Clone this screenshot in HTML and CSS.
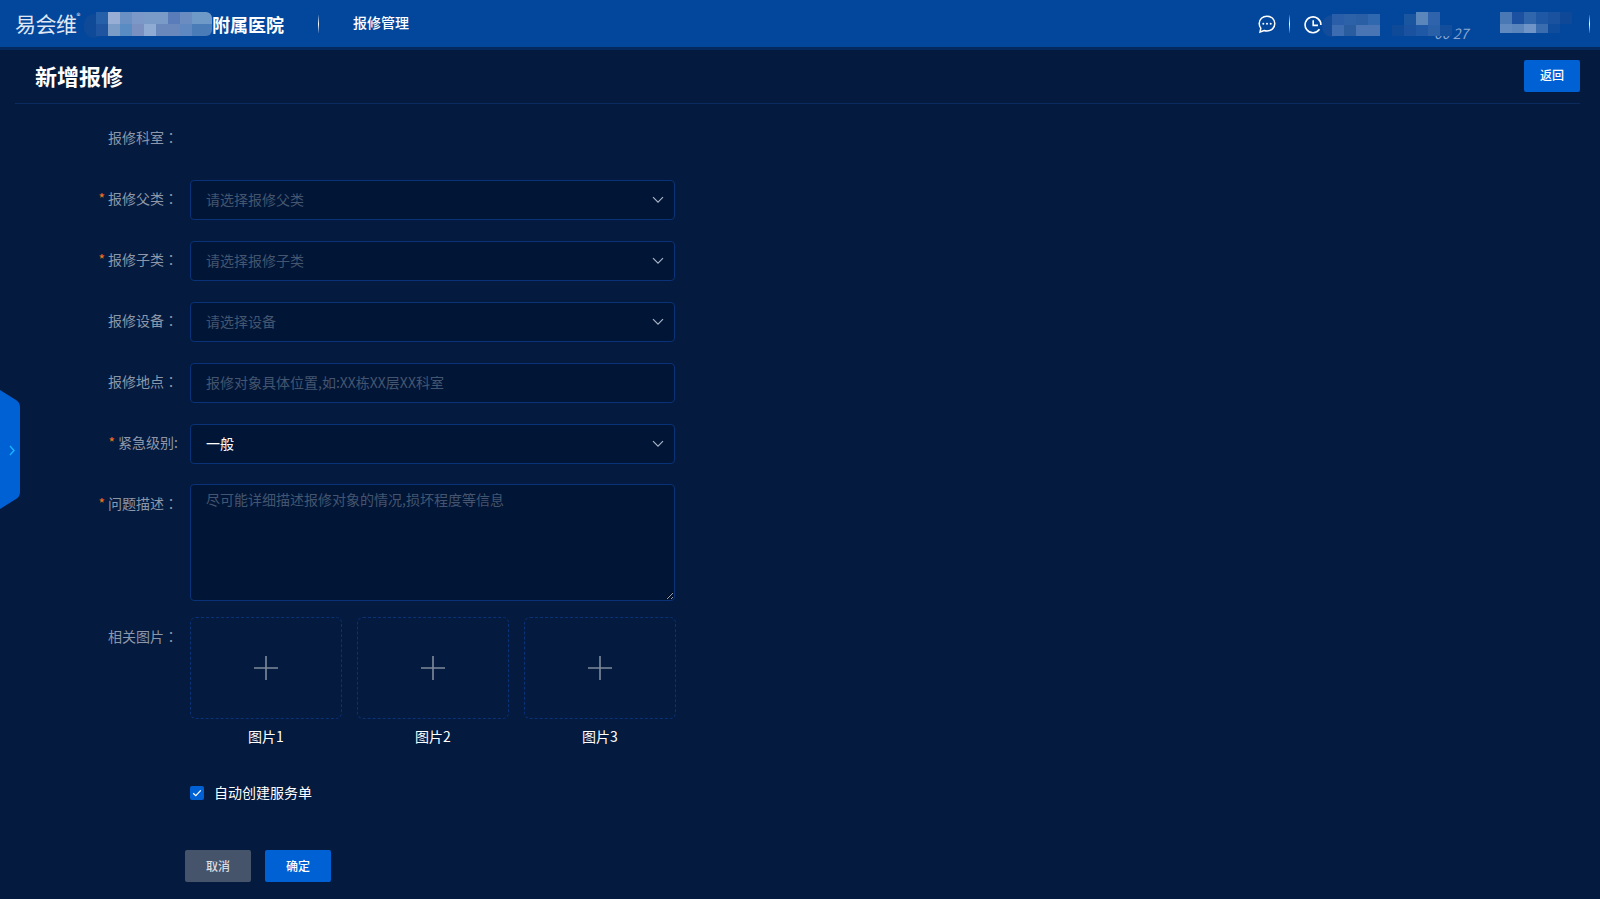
FILE: index.html
```html
<!DOCTYPE html>
<html lang="zh-CN">
<head>
<meta charset="utf-8">
<title>新增报修</title>
<link rel="stylesheet" href="styles.css">
</head>
<body>
<header class="topbar">
  <div class="logo">易会维<sup class="reg">®</sup></div>
  <svg class="mosaic-left" width="128" height="47" viewBox="0 0 128 47">
    <rect x="0" y="14" width="20" height="24" rx="10" fill="#0f4a98"/>
    <rect x="12" y="12" width="12" height="12" fill="#2560a8"/><rect x="24" y="12" width="12" height="12" fill="#99aed4"/><rect x="36" y="12" width="12" height="12" fill="#6a90c4"/><rect x="48" y="12" width="12" height="12" fill="#7c98c8"/><rect x="60" y="12" width="12" height="12" fill="#7a9ac8"/><rect x="72" y="12" width="12" height="12" fill="#7a9ac8"/><rect x="84" y="12" width="12" height="12" fill="#5a7cb8"/><rect x="96" y="12" width="12" height="12" fill="#6a8cc0"/>
    <rect x="12" y="24" width="12" height="12" fill="#1f55a0"/><rect x="24" y="24" width="12" height="12" fill="#7c9cc8"/><rect x="36" y="24" width="12" height="12" fill="#5a8cc4"/><rect x="48" y="24" width="12" height="12" fill="#7a90c0"/><rect x="60" y="24" width="12" height="12" fill="#8fabd4"/><rect x="72" y="24" width="12" height="12" fill="#6a88bc"/><rect x="84" y="24" width="12" height="12" fill="#6a88bc"/><rect x="96" y="24" width="12" height="12" fill="#6088c0"/>
    <path d="M108 12h14a6 6 0 0 1 6 6v6h-20z" fill="#6f9ac8"/>
    <path d="M108 24h20v6a6 6 0 0 1-6 6h-14z" fill="#4a7cb8"/>
  </svg>
  <div class="hospital">附属医院</div>
  <span class="sep sep-nav"></span>
  <nav class="nav">报修管理</nav>
  <div class="top-right">
    <svg class="icon-msg" width="20" height="20" viewBox="0 0 20 20" fill="none" stroke="#fff" stroke-width="1.5">
      <path d="M10 2.200c4.400 0 7.800 3.200 7.800 7.400s-3.400 7.400-7.800 7.400c-1 0-2-.2-2.900-.5L3 18l.8-3.700C2.800 13 2.200 11.400 2.200 9.600 2.200 5.400 5.600 2.200 10 2.200z"/>
      <circle cx="6.300" cy="9.700" r="1" fill="#fff" stroke="none"/><circle cx="10" cy="9.700" r="1" fill="#fff" stroke="none"/><circle cx="13.700" cy="9.700" r="1" fill="#fff" stroke="none"/>
    </svg>
    <span class="sep sep-msg"></span>
    <svg class="icon-clock" width="18" height="18" viewBox="0 0 18 18" fill="none" stroke="#fff" stroke-width="1.600">
      <path d="M15.500 13.300A7.900 7.900 0 1 1 16.900 9"/>
      <path d="M9.200 4.200V9.400H14"/>
    </svg>
    <div class="user-block">
      <span class="time-tail">00 27</span>
      <svg class="user-mosaic" width="258" height="47" viewBox="0 0 258 47">
        <rect x="0" y="15" width="20" height="22" rx="10" fill="#124c9b"/>
        <rect x="10" y="14" width="12" height="11" fill="#2a5ea8"/><rect x="22" y="14" width="12" height="11" fill="#2d62a8"/><rect x="34" y="14" width="12" height="11" fill="#2a5fa5"/><rect x="46" y="14" width="12" height="11" fill="#2f68ae"/>
        <rect x="10" y="25" width="12" height="11" fill="#3d6db0"/><rect x="22" y="25" width="12" height="11" fill="#2a5ca0"/><rect x="34" y="25" width="12" height="11" fill="#4a75b5"/><rect x="46" y="25" width="12" height="11" fill="#4a75b5"/>
        <rect x="70" y="25" width="60" height="11" fill="#0f4a98"/>
        <rect x="82" y="14" width="12" height="11" fill="#1a56a0"/><rect x="94" y="12" width="12" height="13" fill="#5a86bc"/><rect x="106" y="12" width="12" height="13" fill="#2f64ac"/>
        <rect x="82" y="25" width="12" height="11" fill="#1a52a0"/><rect x="94" y="25" width="12" height="11" fill="#1f58a4"/><rect x="106" y="25" width="12" height="11" fill="#2a60a8"/><rect x="118" y="25" width="12" height="11" fill="#134e9c"/>
        <rect x="178" y="12" width="12" height="12" fill="#4a78b4"/><rect x="190" y="12" width="12" height="12" fill="#1c50a0"/><rect x="202" y="12" width="12" height="12" fill="#2f66ac"/><rect x="214" y="12" width="12" height="12" fill="#1f58a4"/><rect x="226" y="12" width="12" height="12" fill="#1a52a0"/><rect x="238" y="12" width="12" height="12" fill="#0f4896"/>
        <rect x="178" y="24" width="12" height="9" fill="#6089c0"/><rect x="190" y="24" width="12" height="9" fill="#5a84bc"/><rect x="202" y="24" width="12" height="9" fill="#6f94c8"/><rect x="214" y="24" width="12" height="9" fill="#3a6cb0"/><rect x="226" y="24" width="12" height="9" fill="#0f4c9c"/>
      </svg>
    </div>
    <span class="sep sep-end"></span>
  </div>
</header>

<svg class="side-tab" width="20" height="120" viewBox="0 0 20 120">
  <path d="M0 0L16 10Q20 12.500 20 17V102Q20 106.500 16 109L0 119z" fill="#0061d5"/>
  <path d="M10 56l4 4.500-4 4.500" fill="none" stroke="#16b4ff" stroke-width="1.400"/>
</svg>

<main class="page">
  <div class="title-row">
    <h1 class="title">新增报修</h1>
    <button class="btn btn-primary" type="button">返回</button>
  </div>

  <form class="form">
    <div class="row">
      <label class="label">报修科室<span class="colon" lang="zh-TW">：</span></label>
      <div class="control"></div>
    </div>
    <div class="row">
      <label class="label"><i class="req">*</i>报修父类<span class="colon" lang="zh-TW">：</span></label>
      <div class="control select"><span class="ph">请选择报修父类</span><svg class="chev" width="12" height="8" viewBox="0 0 12 8"><path d="M1 1.200l5 5 5-5" fill="none" stroke="#a9b4c4" stroke-width="1.200"/></svg></div>
    </div>
    <div class="row">
      <label class="label"><i class="req">*</i>报修子类<span class="colon" lang="zh-TW">：</span></label>
      <div class="control select"><span class="ph">请选择报修子类</span><svg class="chev" width="12" height="8" viewBox="0 0 12 8"><path d="M1 1.200l5 5 5-5" fill="none" stroke="#a9b4c4" stroke-width="1.200"/></svg></div>
    </div>
    <div class="row">
      <label class="label">报修设备<span class="colon" lang="zh-TW">：</span></label>
      <div class="control select"><span class="ph">请选择设备</span><svg class="chev" width="12" height="8" viewBox="0 0 12 8"><path d="M1 1.200l5 5 5-5" fill="none" stroke="#a9b4c4" stroke-width="1.200"/></svg></div>
    </div>
    <div class="row">
      <label class="label">报修地点<span class="colon" lang="zh-TW">：</span></label>
      <input class="control input" type="text" placeholder="报修对象具体位置,如:XX栋XX层XX科室">
    </div>
    <div class="row">
      <label class="label"><i class="req">*</i>紧急级别:</label>
      <div class="control select"><span class="val">一般</span><svg class="chev" width="12" height="8" viewBox="0 0 12 8"><path d="M1 1.200l5 5 5-5" fill="none" stroke="#a9b4c4" stroke-width="1.200"/></svg></div>
    </div>
    <div class="row row-area">
      <label class="label"><i class="req">*</i>问题描述<span class="colon" lang="zh-TW">：</span></label>
      <textarea class="control area" placeholder="尽可能详细描述报修对象的情况,损坏程度等信息"></textarea>
    </div>
    <div class="row row-upload">
      <label class="label">相关图片<span class="colon" lang="zh-TW">：</span></label>
      <div class="uploads">
        <div class="upload"><div class="drop"><svg width="24" height="24" viewBox="0 0 24 24"><path d="M12 0v24M0 12h24" stroke="#7f8b9c" stroke-width="1.600"/></svg></div><div class="cap">图片1</div></div>
        <div class="upload"><div class="drop"><svg width="24" height="24" viewBox="0 0 24 24"><path d="M12 0v24M0 12h24" stroke="#7f8b9c" stroke-width="1.600"/></svg></div><div class="cap">图片2</div></div>
        <div class="upload"><div class="drop"><svg width="24" height="24" viewBox="0 0 24 24"><path d="M12 0v24M0 12h24" stroke="#7f8b9c" stroke-width="1.600"/></svg></div><div class="cap">图片3</div></div>
      </div>
    </div>
    <div class="check-row">
      <span class="check"><svg width="14" height="14" viewBox="0 0 14 14"><path d="M3.200 7.200l2.600 2.500 5-5.400" fill="none" stroke="#fff" stroke-width="1.200"/></svg></span>
      <span class="check-text">自动创建服务单</span>
    </div>
    <div class="actions">
      <button class="btn btn-gray" type="button">取消</button>
      <button class="btn btn-primary" type="button">确定</button>
    </div>
  </form>
</main>
</body>
</html>
```

FILE: styles.css
```css
* { box-sizing: border-box; }

html, body {
  margin: 0;
  height: 899px;
  overflow: hidden;
  background: #041a3e;
  font-family: "Noto Sans CJK SC", "Liberation Sans", sans-serif;
  font-size: 14px;
  color: #fff;
}

.topbar {
  display: flex;
  align-items: center;
  height: 50px;
  padding-left: 15px;
  background: #03479c;
  border-bottom: 3px solid #03295e;
}

.logo {
  width: 69px;
  font-size: 21px;
  line-height: 1;
  font-weight: 400;
  letter-spacing: -0.5px;
  color: #e0e8f5;
  white-space: nowrap;
}

.reg {
  font-size: 8px;
  vertical-align: 13px;
  line-height: 0;
}

.mosaic-left { display: block; flex: none; }

.hospital {
  font-size: 18px;
  font-weight: 700;
  width: 106px;
}

.sep {
  display: block;
  width: 1px;
  height: 18px;
  flex: none;
  background: linear-gradient(180deg, rgba(255,255,255,.1), #fff 50%, rgba(255,255,255,.1));
}

.nav {
  margin-left: 34px;
  padding-bottom: 3px;
  font-size: 14px;
  font-weight: 500;
}

.top-right {
  margin-left: auto;
  display: flex;
  align-items: center;
  padding-right: 10px;
}

.icon-msg { display: block; }
.sep-msg { margin: 0 14px 0 12px; }
.icon-clock { display: block; position: relative; top: 1px; }

.user-block {
  position: relative;
  width: 258px;
  height: 47px;
  margin-right: 9px;
}

.user-mosaic {
  display: block;
  position: relative;
}

.time-tail {
  position: absolute;
  left: 112px;
  top: 26px;
  font-size: 14px;
  line-height: 14px;
  font-style: italic;
  color: #8aa6d0;
}

.side-tab {
  position: absolute;
  left: 0;
  top: 390px;
  display: block;
}

.page { padding: 0 20px 0 15px; }

.title-row {
  display: flex;
  align-items: center;
  justify-content: space-between;
  height: 54px;
  padding-left: 20px;
  border-bottom: 1px solid #0b2a5e;
}

.title {
  margin: 0 0 4px;
  font-size: 22px;
  font-weight: 700;
  line-height: 30px;
}

.btn {
  width: 66px;
  height: 32px;
  padding: 0 0 2px;
  border: 0;
  border-radius: 2px;
  font-family: inherit;
  font-size: 12px;
  font-weight: 500;
  color: #fff;
}

.title-row .btn { width: 56px; position: relative; top: -1px; }

.btn-primary { background: #0061d5; }
.btn-gray { background: #45546a; color: #d8dde4; }

.form {
  display: flex;
  flex-direction: column;
  gap: 21px;
  padding-top: 15px;
}

.row {
  display: grid;
  grid-template-columns: 163px 485px;
  column-gap: 12px;
  min-height: 40px;
}

.label {
  text-align: right;
  font-size: 14px;
  line-height: 36px;
  color: #8c98aa;
  white-space: nowrap;
}

.colon { font-family: "Noto Sans CJK TC", sans-serif; }

.req {
  font-style: normal;
  color: #f0761e;
  margin-right: 3px;
}

.control {
  height: 40px;
  border-radius: 4px;
}

.select, .input, .area {
  background: #011537;
  border: 1px solid #0a3278;
}

.select {
  display: flex;
  align-items: center;
  justify-content: space-between;
  padding: 0 10px 0 15px;
}

.select span { padding-bottom: 2px; }

.ph { color: #44556f; }
.val { color: #fff; }

.input, .area {
  display: block;
  width: 100%;
  padding: 0 15px;
  font-family: inherit;
  font-size: 14px;
  color: #fff;
  outline: none;
}

.input { padding-bottom: 2px; }

.input::placeholder, .area::placeholder { color: #44556f; opacity: 1; }

.row-area { margin-top: -1px; }
.row-area .label { line-height: 38px; }

.area {
  height: 117px;
  padding-top: 4px;
  resize: both;
}

.row-upload { margin-top: -5px; }
.row-upload .label { line-height: 38px; }

.uploads {
  display: flex;
  gap: 15px;
}

.upload { flex: none; width: 152px; }

.drop {
  display: flex;
  align-items: center;
  justify-content: center;
  height: 102px;
  border: 1px dashed #0a3278;
  border-radius: 6px;
}

.drop svg { display: block; }

.cap {
  margin-top: 7px;
  text-align: center;
  font-size: 14px;
  line-height: 20px;
}

.check-row {
  display: flex;
  align-items: center;
  margin: 15px 0 0 175px;
  height: 20px;
}

.check {
  width: 14px;
  height: 14px;
  border-radius: 2px;
  background: #0061d5;
  margin: 2px 10px 0 0;
}

.check svg { display: block; }

.check-text { font-size: 14px; }

.actions {
  display: flex;
  gap: 14px;
  margin: 27px 0 0 170px;
}
```
